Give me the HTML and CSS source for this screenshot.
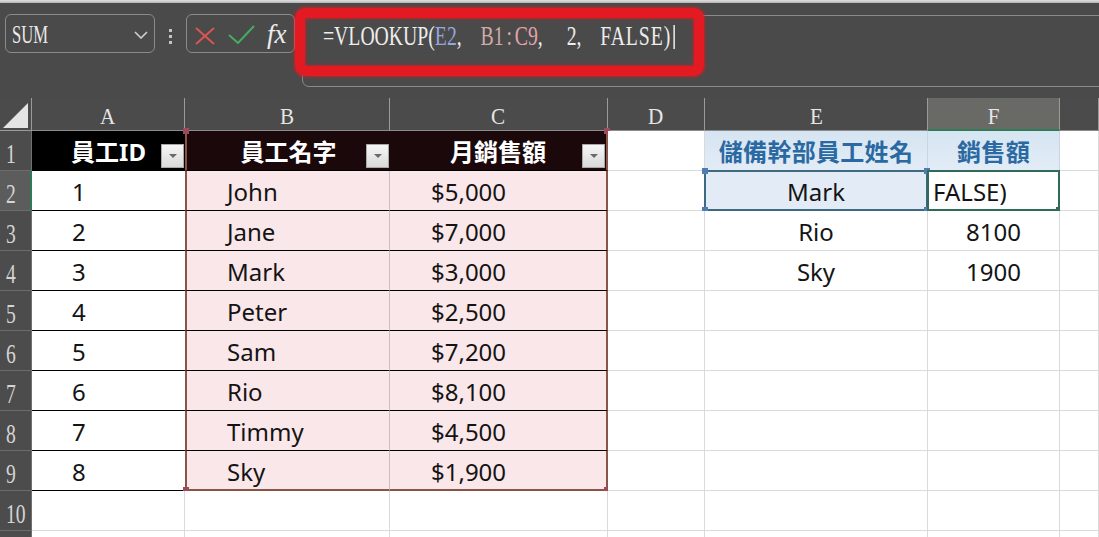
FILE: index.html
```html
<!DOCTYPE html>
<html>
<head>
<meta charset="utf-8">
<link rel="stylesheet" href="styles.css">
</head>
<body>
<div class="topstrip"></div>
<div class="fbar">
  <div class="namebox">
    <span class="serifc nb-text">SUM</span>
    <svg class="chev" width="14" height="8" viewBox="0 0 14 8"><polyline points="1,1 7,7 13,1" fill="none" stroke="#cfcfcf" stroke-width="1.6"/></svg>
  </div>
  <div class="vdots"><i></i><i></i><i></i></div>
  <div class="fbtns">
    <svg class="ic-x" width="20" height="18" viewBox="0 0 20 18"><line x1="1" y1="1" x2="19" y2="17" stroke="#dd5452" stroke-width="2"/><line x1="19" y1="1" x2="1" y2="17" stroke="#dd5452" stroke-width="2"/></svg>
    <svg class="ic-ok" width="27" height="19" viewBox="0 0 27 19"><polyline points="1,10 10,18 26,1" fill="none" stroke="#44ad5f" stroke-width="2"/></svg>
    <span class="fx">fx</span>
  </div>
  <div class="finput">
    <span class="serifc ftext">=VLOOKUP(<span class="r1">E2</span>, <span class="r2">B1<span class="colon">:</span></span><span class="r3">C9</span>, <span class="arg3">2</span>, <span class="arg4">FALSE)</span><span class="caret"></span></span>
  </div>
</div>
<div class="redmark"></div>

<div class="sheet">
  <!-- column headers -->
  <div class="corner"><svg width="32" height="33" viewBox="0 0 32 33"><polygon points="3,30 28,5 28,30" fill="#e4e4e4"/></svg></div>
  <div class="ch"><span class="serifl">A</span></div>
  <div class="ch"><span class="serifl">B</span></div>
  <div class="ch"><span class="serifl">C</span></div>
  <div class="ch"><span class="serifl">D</span></div>
  <div class="ch"><span class="serifl">E</span></div>
  <div class="ch ch-sel"><span class="serifl">F</span></div>
  <div class="ch"></div>

  <!-- row 1 -->
  <div class="rh"><span class="serifn">1</span></div>
  <div class="c hA">員工ID<span class="dd"></span></div>
  <div class="c hB">員工名字<span class="dd"></span><span class="hnd h-tl"></span></div>
  <div class="c hC">月銷售額<span class="dd"></span><span class="hnd h-tr"></span></div>
  <div class="c"></div>
  <div class="c hE">儲備幹部員工姓名</div>
  <div class="c hE">銷售額</div>
  <div class="c"></div>

  <!-- row 2 -->
  <div class="rh rh-sel"><span class="serifn">2</span></div>
  <div class="c dA">1</div>
  <div class="c dB">John</div>
  <div class="c dC">$5,000</div>
  <div class="c"></div>
  <div class="c e2">Mark<span class="selbox"><i class="bh b-tl"></i><i class="bh b-tr"></i><i class="bh b-bl"></i><i class="bh b-br"></i></span></div>
  <div class="c f2">FALSE)<span class="actbox"><i class="fill"></i></span></div>
  <div class="c"></div>

  <!-- row 3 -->
  <div class="rh"><span class="serifn">3</span></div>
  <div class="c dA">2</div>
  <div class="c dB">Jane</div>
  <div class="c dC">$7,000</div>
  <div class="c"></div>
  <div class="c ctr">Rio</div>
  <div class="c ctr">8100</div>
  <div class="c"></div>

  <!-- row 4 -->
  <div class="rh"><span class="serifn">4</span></div>
  <div class="c dA">3</div>
  <div class="c dB">Mark</div>
  <div class="c dC">$3,000</div>
  <div class="c"></div>
  <div class="c ctr">Sky</div>
  <div class="c ctr">1900</div>
  <div class="c"></div>

  <!-- row 5 -->
  <div class="rh"><span class="serifn">5</span></div>
  <div class="c dA">4</div>
  <div class="c dB">Peter</div>
  <div class="c dC">$2,500</div>
  <div class="c"></div>
  <div class="c"></div>
  <div class="c"></div>
  <div class="c"></div>

  <!-- row 6 -->
  <div class="rh"><span class="serifn">6</span></div>
  <div class="c dA">5</div>
  <div class="c dB">Sam</div>
  <div class="c dC">$7,200</div>
  <div class="c"></div>
  <div class="c"></div>
  <div class="c"></div>
  <div class="c"></div>

  <!-- row 7 -->
  <div class="rh"><span class="serifn">7</span></div>
  <div class="c dA">6</div>
  <div class="c dB">Rio</div>
  <div class="c dC">$8,100</div>
  <div class="c"></div>
  <div class="c"></div>
  <div class="c"></div>
  <div class="c"></div>

  <!-- row 8 -->
  <div class="rh"><span class="serifn">8</span></div>
  <div class="c dA">7</div>
  <div class="c dB">Timmy</div>
  <div class="c dC">$4,500</div>
  <div class="c"></div>
  <div class="c"></div>
  <div class="c"></div>
  <div class="c"></div>

  <!-- row 9 -->
  <div class="rh"><span class="serifn">9</span></div>
  <div class="c dA">8</div>
  <div class="c dB last">Sky<span class="hnd h-bl"></span></div>
  <div class="c dC last">$1,900<span class="hnd h-br"></span></div>
  <div class="c"></div>
  <div class="c"></div>
  <div class="c"></div>
  <div class="c"></div>

  <!-- row 10 -->
  <div class="rh"><span class="serifn">10</span></div>
  <div class="c"></div>
  <div class="c"></div>
  <div class="c"></div>
  <div class="c"></div>
  <div class="c"></div>
  <div class="c"></div>
  <div class="c"></div>

  <!-- row 11 (only its top edge is visible) -->
  <div class="rh"></div>
  <div class="c"></div>
  <div class="c"></div>
  <div class="c"></div>
  <div class="c"></div>
  <div class="c"></div>
  <div class="c"></div>
  <div class="c"></div>
</div>
</body>
</html>
```

FILE: styles.css
```css
* { box-sizing: border-box; }
html, body { margin: 0; padding: 0; }
body {
  width: 1099px;
  height: 537px;
  overflow: hidden;
  position: relative;
  background: #4a4a4a;
  font-family: "Noto Sans", "Noto Sans CJK TC", sans-serif;
}

.topstrip {
  height: 3px;
  background: linear-gradient(#e2e2e2, #b4b4b4);
}

/* ---------- formula bar ---------- */
.fbar {
  height: 95px;
  display: flex;
  align-items: flex-start;
  padding: 11px 0 0 5px;
}
.serifc {
  font-family: "Liberation Serif", serif;
  display: inline-block;
  transform-origin: left center;
  white-space: pre;
}
.namebox {
  width: 150px;
  height: 39px;
  border: 1px solid #8a8a8a;
  border-radius: 6px;
  display: flex;
  align-items: center;
  justify-content: space-between;
  padding: 0 6px 0 6px;
}
.nb-text {
  font-size: 26px;
  line-height: 30px;
  color: #e8e8e8;
  transform: scaleX(0.64);
  margin-top: 3px;
}
.chev { margin-top: 2px; }

.vdots {
  width: 3px;
  margin: 15px 14px 0 14px;
  display: flex;
  flex-direction: column;
  gap: 3px;
}
.vdots i {
  display: block;
  width: 3px;
  height: 3px;
  background: #c4c4c4;
}

.fbtns {
  width: 109px;
  height: 39px;
  border: 1px solid #8a8a8a;
  border-radius: 6px;
  display: flex;
  align-items: flex-start;
  padding-left: 8px;
}
.ic-x { margin-top: 12px; }
.ic-ok { margin: 10px 0 0 13px; }
.fx {
  font-family: "Liberation Serif", serif;
  font-style: italic;
  font-size: 27px;
  line-height: 30px;
  color: #ececec;
  margin: 4px 0 0 12px;
}

.finput {
  flex: 1;
  margin: 1px -12px 0 7px;
  height: 72px;
  border: 1px solid #8a8a8a;
  border-radius: 7px;
  padding: 5px 0 0 20px;
  display: flex;
  align-items: flex-start;
}
.ftext {
  font-size: 27px;
  line-height: 30px;
  color: #ededed;
  transform: scaleX(0.73);
  word-spacing: 19px;
}
.colon { margin: 0 4px; }
.arg3 { margin-left: 7px; }
.arg4 { letter-spacing: 1.3px; }
.r1 { color: #95a6dc; }
.r2 { color: #d2aaa6; }
.r3 { color: #e2a3ad; }
.caret {
  display: inline-block;
  width: 2px;
  height: 24px;
  background: #f0f0f0;
  margin-left: 3px;
  vertical-align: -4px;
}

.redmark {
  position: absolute;
  left: 295px;
  top: 8px;
  width: 409px;
  height: 68px;
  border: 10px solid #e31a22;
  border-radius: 10px;
  box-shadow: 0 0 3px 1px rgba(227, 26, 34, 0.7), inset 0 0 3px 1px rgba(227, 26, 34, 0.7);
  pointer-events: none;
}

/* ---------- sheet ---------- */
.sheet {
  display: grid;
  grid-template-columns: 32px 153px 205px 218px 97px 223px 132px 1fr;
  grid-template-rows: 33px repeat(11, 40px);
}
.corner {
  background: #4b4b4b;
  border-right: 1px solid #9a9a9a;
  border-bottom: 1px solid #9a9a9a;
}
.corner svg { display: block; }
.ch {
  background: #4b4b4b;
  border-right: 1px solid #9a9a9a;
  border-bottom: 1px solid #8c8c8c;
  display: flex;
  align-items: center;
  justify-content: center;
}
.ch-sel {
  background: #696965;
  border-bottom: 2px solid #2f7a57;
}
.serifl {
  font-family: "Liberation Serif", serif;
  font-size: 24px;
  line-height: 26px;
  color: #e6e6e6;
  display: inline-block;
  transform: scaleX(0.88);
  margin-top: 4px;
}
.rh {
  background: #4c4c4c;
  border-right: 1px solid #707070;
  border-bottom: 1px solid #6c6c6c;
  display: flex;
  align-items: center;
  padding-left: 6px;
}
.rh-sel {
  background: #5c5c5c;
  border-right: 2px solid #2f7a57;
}
.serifn {
  font-family: "Liberation Serif", serif;
  font-size: 28px;
  line-height: 30px;
  color: #d4d4d4;
  display: inline-block;
  transform: scaleX(0.7);
  transform-origin: left center;
  margin-top: 6px;
}

.c {
  background: #fff;
  border-right: 1px solid #dadada;
  border-bottom: 1px solid #dadada;
  display: flex;
  align-items: center;
  font-size: 24px;
  color: #141414;
  position: relative;
  white-space: nowrap;
  padding-top: 2px;
}
.ctr { justify-content: center; }

/* left table header */
.hA, .hB, .hC {
  color: #fff;
  font-weight: bold;
  justify-content: center;
  border-bottom: 1px solid #000;
  padding-top: 0;
}
.hA { background: #000; border-right: none; }
.hB { background: #1a080b; border-left: 2px solid #8a5547; border-right: none; }
.hC { background: #1a080b; border-right: 2px solid #8a5547; }

.dd {
  position: absolute;
  right: 1px;
  bottom: 2px;
  width: 23px;
  height: 24px;
  background: linear-gradient(#f6f6f6, #d9d9d9);
  border: 1px solid #a8a8a8;
}
.dd::after {
  content: "";
  position: absolute;
  left: 7px;
  top: 9px;
  border-left: 4px solid transparent;
  border-right: 4px solid transparent;
  border-top: 4px solid #6a6a6a;
}

/* left table data */
.dA {
  border-right: none;
  border-bottom: 1px solid #000;
  padding-left: 40px;
}
.dB {
  background: #fae7ea;
  border-left: 2px solid #8a5547;
  border-right: 1px solid #cbbfc2;
  border-bottom: 1px solid #000;
  padding-left: 40px;
}
.dC {
  background: #fae7ea;
  border-right: 2px solid #8a5547;
  border-bottom: 1px solid #000;
  padding-left: 41px;
}
.dB.last, .dC.last { border-bottom: 2px solid #8a5547; }

.hnd {
  position: absolute;
  width: 6px;
  height: 6px;
  background: #9a4a5c;
}
.h-tl { left: -4px; top: -3px; }
.h-tr { right: -4px; top: -3px; }
.h-bl { left: -4px; bottom: -4px; }
.h-br { right: -4px; bottom: -4px; }

/* right table */
.hE {
  background: linear-gradient(#d6e5f2, #e2ecf6);
  color: #2b69a3;
  font-weight: bold;
  justify-content: center;
  border-right: 1px solid #c9d6e2;
  border-bottom: 1px solid #cfdbe6;
  padding-top: 0;
  letter-spacing: 0.3px;
}
.e2 {
  background: #e3ecf6;
  justify-content: center;
}
.selbox {
  position: absolute;
  left: -1px;
  top: -1px;
  right: -1px;
  bottom: -1px;
  border: 2px solid #3d6a7e;
}
.bh {
  position: absolute;
  width: 6px;
  height: 6px;
  background: #4d7db3;
}
.b-tl { left: -4px; top: -4px; }
.b-tr { right: -4px; top: -4px; }
.b-bl { left: -4px; bottom: -4px; }
.b-br { right: -4px; bottom: -4px; }

.f2 {
  padding-left: 5px;
}
.actbox {
  position: absolute;
  left: -1px;
  top: -1px;
  right: -1px;
  bottom: -1px;
  border: 2px solid #2f6b58;
}
.fill {
  position: absolute;
  right: -4px;
  bottom: -4px;
  width: 6px;
  height: 6px;
  background: #2f6b58;
}
```
